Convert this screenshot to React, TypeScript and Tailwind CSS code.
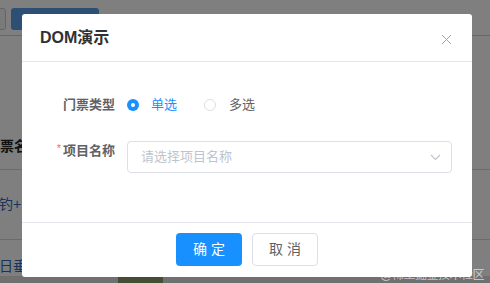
export default function App() {
  const font = { fontFamily: '"Liberation Sans", "Noto Sans CJK SC", sans-serif' };
  return (
    <div className="relative w-[490px] h-[283px] overflow-hidden bg-white" style={font}>
      {/* underlying page */}
      <div className="flex flex-col">
        <div className="h-[36px] border-b border-[#cfcfcf] flex items-start pt-[8px] gap-[5px] -ml-[21px]">
          <div className="w-[27px] h-[22px] border border-[#c8c8c8] bg-[#f4f4f4] rounded-[3px]" />
          <div className="w-[88px] h-[22px] bg-[#5a9ee8] rounded-[3px]" />
        </div>
        <div className="h-[134px] border-b border-[#d6d6d6] flex items-end pb-[12px] -ml-[14px]">
          <span className="text-[14px] text-[#222] font-bold">门票名称</span>
        </div>
        <div className="h-[70px] border-b border-[#d6d6d6] flex items-center -ml-[1px]">
          <span className="text-[14px] text-[#2a66b8]">钓+垂钓</span>
        </div>
        <div className="h-[36px] flex items-end -ml-[1px]">
          <span className="text-[14px] text-[#2a66b8] leading-[20px]">日垂钓</span>
        </div>
        <div className="h-[10px] bg-[#e0e0e0] flex pl-[118px]">
          <div className="w-[45px] h-[10px] bg-[#8a9a6a]" />
        </div>
      </div>

      {/* overlay */}
      <div className="absolute inset-0 bg-black/50" />

      {/* watermark */}
      <div className="absolute right-[6px] bottom-[0px] text-[12px] leading-[16px] text-white/60 tracking-[-0.5px]">
        @稀土掘金技术社区
      </div>

      {/* modal */}
      <div className="absolute left-[22px] top-[14px] w-[450px] h-[263px] bg-white rounded-[3px] flex flex-col">
        <div className="h-[48px] border-b border-[#e4e7ed] flex items-center justify-between pl-[18px] pr-[20px]">
          <span className="text-[16px] font-bold text-[#303133] pt-[1px]">DOM演示</span>
          <svg width="11" height="11" viewBox="0 0 11 11" className="mt-[4px]">
            <path d="M1 1 L10 10 M10 1 L1 10" stroke="#a0a3a8" strokeWidth="1" fill="none" />
          </svg>
        </div>
        <div className="flex flex-col pt-[33px] pb-[48px] pl-[20px] pr-[20px] gap-[26px] flex-1">
          <div className="flex items-center h-[20px]">
            <div className="w-[85px] pr-[12px] text-right text-[13px] text-[#606266] font-bold">门票类型</div>
            <div className="flex items-center">
              <span className="w-[12px] h-[12px] rounded-full bg-[#1890ff] flex items-center justify-center">
                <span className="w-[4px] h-[4px] rounded-full bg-white" />
              </span>
              <span className="ml-[12px] text-[13px] text-[#1890ff]">单选</span>
              <span className="ml-[27px] w-[12px] h-[12px] rounded-full border border-[#dcdfe6] bg-white" />
              <span className="ml-[13px] text-[13px] text-[#606266]">多选</span>
            </div>
          </div>
          <div className="flex items-start">
            <div className="w-[85px] pr-[12px] flex justify-end items-start pt-[1px]">
              <span className="text-[#f56c6c] text-[11px] leading-[12px] mr-[2px] mt-[0px]">*</span>
              <span className="text-[13px] leading-[18px] text-[#606266] font-bold">项目名称</span>
            </div>
            <div className="flex-1 h-[32px] border border-[#dcdfe6] rounded-[4px] flex items-center justify-between pl-[13px] pr-[10px]">
              <span className="text-[13px] text-[#c0c4cc]">请选择项目名称</span>
              <svg width="11" height="7" viewBox="0 0 11 7">
                <path d="M1 1 L5.5 5.5 L10 1" stroke="#c0c4cc" strokeWidth="1.1" fill="none" />
              </svg>
            </div>
          </div>
        </div>
        <div className="border-t border-[#e4e7ed] h-[55px] flex items-start justify-center pt-[10px] gap-[10px]">
          <button className="w-[66px] h-[33px] rounded-[4px] bg-[#1890ff] text-white text-[14px]">确 定</button>
          <button className="w-[66px] h-[33px] rounded-[4px] border border-[#dcdfe6] bg-white text-[#606266] text-[14px]">取 消</button>
        </div>
      </div>
    </div>
  );
}
